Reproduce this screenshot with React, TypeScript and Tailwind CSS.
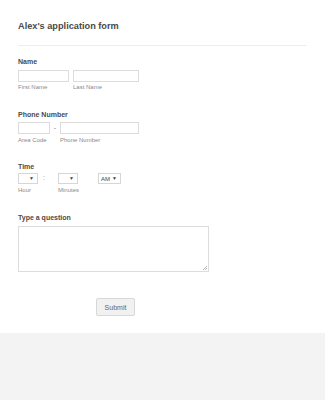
import React from 'react';

const font = { fontFamily: '"Liberation Sans", Arial, sans-serif' };

function Box({ w, h = 12 }: { w: number; h?: number }) {
  return <div className="border border-[#dcdcdc] bg-white" style={{ width: w, height: h }} />;
}

function Select({ w, text }: { w: number; text?: string }) {
  return (
    <div
      className="flex h-[11px] items-center justify-end gap-[2px] border border-[#d6d6d6] bg-white pr-[3px] text-[6px] leading-none text-[#444]"
      style={{ width: w }}
    >
      {text && <span>{text}</span>}
      <span className="text-[5px]">▼</span>
    </div>
  );
}

export default function App() {
  return (
    <div className="min-h-[400px] bg-[#f3f3f3]" style={font}>
      <div className="flex h-[333px] flex-col bg-white px-[18px]">
        <h1 className="mt-[22px] text-[9.2px] font-bold leading-none text-[#4a4a4a]">Alex's application form</h1>
        <div className="mt-[14px] h-px bg-[#ededed]" />

        {/* Name */}
        <div className="mt-[12px] text-[7px] font-bold leading-none text-[#4a4a4a]">Name</div>
        <div className="mt-[5px] flex gap-[4px]">
          <div className="flex flex-col">
            <Box w={51} />
            <span className="mt-[2px] text-[6px] leading-none text-[#8a8a8a]">First Name</span>
          </div>
          <div className="flex flex-col">
            <Box w={66} />
            <span className="mt-[2px] text-[6px] leading-none text-[#8a8a8a]">Last Name</span>
          </div>
        </div>

        {/* Phone */}
        <div className="mt-[21px] text-[7px] font-bold leading-none text-[#4a4a4a]">Phone Number</div>
        <div className="mt-[4px] flex">
          <div className="flex flex-col">
            <Box w={32} />
            <span className="mt-[3px] text-[6px] leading-none text-[#8a8a8a]">Area Code</span>
          </div>
          <span className="w-[10px] pt-[2px] text-center text-[7px] leading-none text-[#888]">-</span>
          <div className="flex flex-col">
            <Box w={79} />
            <span className="mt-[3px] text-[6px] leading-none text-[#8a8a8a]">Phone Number</span>
          </div>
        </div>

        {/* Time */}
        <div className="mt-[20px] text-[7px] font-bold leading-none text-[#4a4a4a]">Time</div>
        <div className="mt-[3px] flex">
          <div className="flex flex-col">
            <Select w={20} />
            <span className="mt-[3px] text-[6px] leading-none text-[#8a8a8a]">Hour</span>
          </div>
          <span className="w-[20px] pl-[5px] pt-[1px] text-[7px] leading-none text-[#999]">:</span>
          <div className="flex w-[40px] flex-col">
            <Select w={20} />
            <span className="mt-[3px] text-[6px] leading-none text-[#8a8a8a]">Minutes</span>
          </div>
          <div className="flex flex-col">
            <Select w={23} text="AM" />
          </div>
        </div>

        {/* Question */}
        <div className="mt-[21px] text-[7px] font-bold leading-none text-[#4a4a4a]">Type a question</div>
        <div className="relative mt-[5px] h-[46px] w-[191px] border border-[#dcdcdc] bg-white">
          <svg className="absolute bottom-[1px] right-[1px]" width="5" height="5" viewBox="0 0 5 5">
            <path d="M1 5 L5 1 M3 5 L5 3" stroke="#999" strokeWidth="0.7" />
          </svg>
        </div>

        <div className="mt-[26px] flex pl-[78px]">
          <button className="flex h-[18px] w-[39px] items-center justify-center rounded-[2px] border border-[#d8d8d8] bg-[#f1f1f1] text-[7px] leading-none text-[#666]">
            Submit
          </button>
        </div>
      </div>
    </div>
  );
}
